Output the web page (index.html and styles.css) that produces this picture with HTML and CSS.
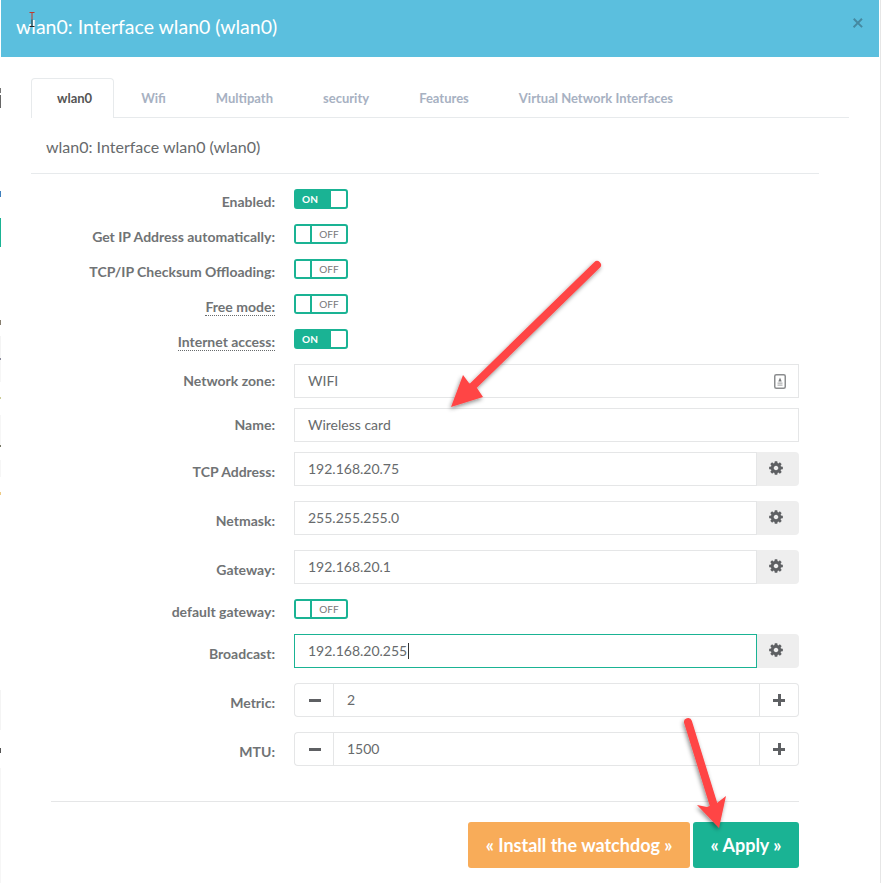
FILE: index.html
```html
<!DOCTYPE html>
<html lang="en">
<head>
<meta charset="utf-8">
<title>wlan0: Interface wlan0 (wlan0)</title>
<link rel="stylesheet" href="styles.css">
</head>
<body>
<svg class="sprite" aria-hidden="true">
  <symbol id="cog" viewBox="0 0 1792 1792"><path d="M1152 896q0-106-75-181t-181-75-181 75-75 181 75 181 181 75 181-75 75-181zm512-109v222q0 12-8 23t-20 13l-185 28q-19 54-39 91 35 50 107 138 10 12 10 25t-9 23q-27 37-99 108t-94 71q-12 0-26-9l-138-108q-44 23-91 38-16 136-29 186-7 28-36 28h-222q-14 0-24.500-8.500t-11.500-21.500l-28-184q-49-16-90-37l-141 107q-10 9-25 9-14 0-25-11-126-114-165-168-7-10-7-23 0-12 8-23 15-21 51-66.500t54-70.500q-27-50-41-99l-183-27q-13-2-21-12.500t-8-23.500v-222q0-12 8-23t19-13l186-28q14-46 39-92-40-57-107-138-10-12-10-24 0-10 9-23 26-36 98.500-107.500t94.500-71.500q13 0 26 10l138 107q44-23 91-38 16-136 29-186 7-28 36-28h222q14 0 24.500 8.500t11.500 21.500l28 184q49 16 90 37l142-107q9-9 24-9 13 0 25 10 129 119 165 170 7 8 7 22 0 12-8 23-15 21-51 66.500t-54 70.500q26 50 41 98l183 28q13 2 21 12.500t8 23.500z"/></symbol>
</svg>
<div class="edge-left"></div>
<div class="edge-right"></div>
<div class="modal">
  <header class="modal-header">
    <h1 class="modal-title">wlan0: Interface wlan0 (wlan0)</h1>
    <span class="close">×</span>
  </header>
  <div class="modal-body">
    <nav class="tabs">
      <a class="tab active">wlan0</a>
      <a class="tab">Wifi</a>
      <a class="tab">Multipath</a>
      <a class="tab">security</a>
      <a class="tab">Features</a>
      <a class="tab">Virtual Network Interfaces</a>
    </nav>
    <h2 class="panel-title">wlan0: Interface wlan0 (wlan0)</h2>
    <form class="form">
      <div class="row"><label class="label">Enabled:</label><div class="toggle on"><span class="state">ON</span><span class="knob"></span></div></div>
      <div class="row"><label class="label">Get IP Address automatically:</label><div class="toggle"><span class="knob"></span><span class="state">OFF</span></div></div>
      <div class="row"><label class="label">TCP/IP Checksum Offloading:</label><div class="toggle"><span class="knob"></span><span class="state">OFF</span></div></div>
      <div class="row"><label class="label"><span class="hint">Free mode:</span></label><div class="toggle"><span class="knob"></span><span class="state">OFF</span></div></div>
      <div class="row"><label class="label"><span class="hint">Internet access:</span></label><div class="toggle on"><span class="state">ON</span><span class="knob"></span></div></div>
      <div class="row tight"><label class="label centered">Network zone:</label>
        <div class="field">WIFI
          <svg class="zone-icon" viewBox="0 0 12 15" width="12" height="15"><rect x="0.75" y="0.75" width="10.500" height="13.500" rx="1.500" fill="none" stroke="#8b8d8f" stroke-width="1.500"/><path d="M6 3.500 7.700 7.500H4.300z" fill="#77797b"/><path d="M3.500 8.500h5v1.300h-5zM3.500 10.500h5v1.300h-5z" fill="#aeb0b1"/></svg>
        </div>
      </div>
      <div class="row tight"><label class="label centered">Name:</label><div class="field">Wireless card</div></div>
      <div class="row"><label class="label low">TCP Address:</label><div class="group"><div class="field">192.168.20.75</div><span class="addon"><svg class="cog"><use href="#cog"/></svg></span></div></div>
      <div class="row"><label class="label low">Netmask:</label><div class="group"><div class="field">255.255.255.0</div><span class="addon"><svg class="cog"><use href="#cog"/></svg></span></div></div>
      <div class="row"><label class="label low">Gateway:</label><div class="group"><div class="field">192.168.20.1</div><span class="addon"><svg class="cog"><use href="#cog"/></svg></span></div></div>
      <div class="row"><label class="label">default gateway:</label><div class="toggle"><span class="knob"></span><span class="state">OFF</span></div></div>
      <div class="row"><label class="label low">Broadcast:</label><div class="group"><div class="field focus">192.168.20.255<span class="caret"></span></div><span class="addon"><svg class="cog"><use href="#cog"/></svg></span></div></div>
      <div class="row"><label class="label low">Metric:</label><div class="group stepper"><span class="step left"><i class="minus"></i></span><div class="field">2</div><span class="step right"><i class="plus"></i></span></div></div>
      <div class="row"><label class="label low">MTU:</label><div class="group stepper"><span class="step left"><i class="minus"></i></span><div class="field">1500</div><span class="step right"><i class="plus"></i></span></div></div>
    </form>
    <footer class="modal-footer">
      <button class="btn warning" type="button">« Install the watchdog »</button>
      <button class="btn primary" type="button">« Apply »</button>
    </footer>
  </div>
</div>
<svg class="annotations" viewBox="0 0 882 883" width="882" height="883" aria-hidden="true">
  <defs><filter id="shadow" x="-30%" y="-30%" width="160%" height="160%"><feDropShadow dx="-1" dy="2" stdDeviation="2" flood-color="#000" flood-opacity="0.45"/></filter></defs>
  <g filter="url(#shadow)" fill="#ff4545" stroke="none">
    <path d="M597 265 473 386" stroke="#ff4545" stroke-width="8" stroke-linecap="round" fill="none"/>
    <path d="M451 407 463 375 469 383 477 388 483 397z"/>
    <path d="M688 722 714 806" stroke="#ff4545" stroke-width="8" stroke-linecap="round" fill="none"/>
    <path d="M719 828 697 805 707 807 717 803 726 796z"/>
  </g>
  <path d="M29.500 12.500h5M32 12.500v7" stroke="#c0392b" fill="none"/>
  <path d="M32 19.500v7M29.500 26.500h5" stroke="#222" fill="none"/>
</svg>
</body>
</html>
```
FILE: styles.css
```css
* { box-sizing: border-box; }
html, body { margin: 0; height: 100%; }
body {
  position: relative;
  width: 882px;
  height: 883px;
  overflow: hidden;
  background: #fff;
  font-family: Lato, "Liberation Sans", sans-serif;
  font-size: 14px;
  color: #676a6c;
}
.sprite { display: none; }
.edge-left {
  position: absolute;
  left: 0;
  top: 57px;
  width: 1px;
  height: 826px;
  background: linear-gradient(to bottom,
    #fff 0 31px, #777 31px 36px, #fff 36px 38px, #666 38px 51px, #fff 51px 134px,
    #3f7fbd 134px 140px, #fff 140px 161px, #1ab394 161px 190px, #fff 190px 263px,
    #887f70 263px 268px, #fff 268px 279px, #f4f4f4 279px 301px, #889 301px 303px,
    #f6f6f6 303px 325px, #fff 325px 340px, #cc9 340px 342px, #fff 342px 358px,
    #f6f6f6 358px 388px, #776 388px 390px, #fff 390px 403px, #f6f6f6 403px 420px,
    #fff 420px 435px, #ec8 435px 438px, #fff 438px 633px, #f4f4f4 633px 673px,
    #fff 673px 691px, #555 691px 696px, #fff 696px 711px, #f6f6f6 711px);
}
.edge-right {
  position: absolute;
  left: 880px;
  top: 0;
  width: 1px;
  height: 883px;
  background: #e6e6e6;
}
.modal {
  position: relative;
  margin-left: 1px;
  width: 878px;
  height: 883px;
  background: #fff;
}
.modal-header {
  display: flex;
  justify-content: space-between;
  height: 57px;
  padding: 13px 15px 0 15px;
  background: #5bbfde;
  color: #fff;
}
.modal-title {
  margin: 0;
  font-size: 19.500px;
  font-weight: 400;
  line-height: 28px;
}
.close {
  margin-top: -1px;
  font-size: 21px;
  font-weight: 700;
  line-height: 20px;
  color: #43849b;
  opacity: .9;
}
.modal-body { padding: 21px 30px 0 30px; }
.tabs {
  display: flex;
  height: 40px;
  border-bottom: 1px solid #e7eaec;
}
.tab {
  height: 40px;
  padding: 0 24px;
  line-height: 38px;
  font-size: 13px;
  font-weight: 700;
  color: #a7b1c2;
  border: 1px solid transparent;
  border-bottom: 0;
}
.tab.active {
  margin-right: 2px;
  padding-left: 25px;
  padding-right: 21px;
  color: #555;
  background: #fff;
  border-color: #e7eaec;
  border-radius: 4px 4px 0 0;
}
.panel-title {
  margin: 0 30px 0 0;
  height: 56px;
  padding: 18px 0 0 15px;
  font-size: 16px;
  font-weight: 400;
  line-height: 22px;
  border-bottom: 1px solid #e7eaec;
}
.form { padding: 15px 50px 0 0; }
.row {
  display: flex;
  align-items: flex-start;
  margin-bottom: 15px;
}
.row.tight { margin-bottom: 10px; }
.label {
  flex: none;
  width: 244px;
  height: 20px;
  margin-right: 19px;
  padding-top: 3px;
  text-align: right;
  font-weight: 700;
  font-size: 14px;
  line-height: 20px;
  color: #707375;
  white-space: nowrap;
}
.label.centered { padding-top: 7px; }
.label.low { padding-top: 10px; }
.hint {
  display: inline-block;
  line-height: 17px;
  padding-top: 1px;
  border-bottom: 1px dotted #676a6c;
}
.toggle {
  display: flex;
  align-items: stretch;
  width: 54px;
  height: 20px;
  border: 2px solid #1ab394;
  border-radius: 3px;
  overflow: hidden;
}
.knob { width: 14px; background: #fff; }
.state {
  flex: 1;
  text-align: center;
  font-size: 10px;
  line-height: 16px;
  color: #777;
  border-left: 2px solid #1ab394;
}
.toggle.on { background: #1ab394; }
.toggle.on .state { color: #fff; font-weight: 700; border-left: 0; padding-right: 7px; }
.toggle.on .knob { width: 15px; }
.group { display: flex; flex: 1; }
.field {
  position: relative;
  flex: 1;
  height: 34px;
  padding: 0 13px;
  border: 1px solid #e5e6e7;
  font-size: 14px;
  line-height: 32px;
  color: #676a6c;
  white-space: nowrap;
}
.field.focus { border-color: #1ab394; }
.caret {
  display: inline-block;
  width: 1px;
  height: 16px;
  margin-left: 1px;
  vertical-align: -3px;
  background: #333;
}
.zone-icon { position: absolute; right: 12px; top: 9px; }
.addon {
  display: flex;
  align-items: center;
  justify-content: center;
  width: 42px;
  height: 34px;
  padding: 0 4px 2px 0;
  background: #eee;
  border-radius: 0 4px 4px 0;
}
.cog { width: 16px; height: 16px; fill: #5e6063; }
.step {
  display: flex;
  align-items: center;
  justify-content: center;
  width: 39px;
  height: 34px;
  border: 1px solid #e5e6e7;
}
.step.left { padding-left: 2px; border-radius: 4px 0 0 4px; border-right: 0; }
.step.right { border-radius: 0 4px 4px 0; border-left: 0; }
.minus, .plus { position: relative; display: block; width: 12px; height: 3px; background: #5e6063; }
.plus::after {
  content: "";
  position: absolute;
  left: 4.500px;
  top: -4.500px;
  width: 3px;
  height: 12px;
  background: #5e6063;
}
.modal-footer {
  display: flex;
  justify-content: flex-end;
  gap: 3px;
  margin: 35px 50px 0 20px;
  padding-top: 20px;
  border-top: 1px solid #e5e6e7;
}
.btn {
  height: 46px;
  padding: 0 17.500px;
  border: 0;
  border-radius: 3px;
  color: #fff;
  font-family: inherit;
  font-size: 18px;
  font-weight: 700;
}
.btn.warning { background: #f8ac59; }
.btn.primary { background: #1ab394; }
.annotations { position: absolute; left: 0; top: 0; pointer-events: none; }
```
